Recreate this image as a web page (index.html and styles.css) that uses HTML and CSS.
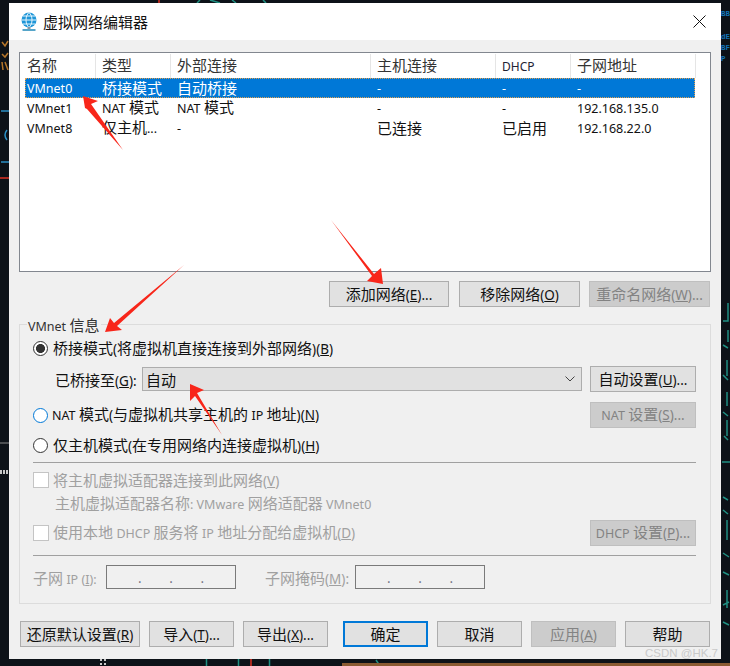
FILE: index.html
```html
<!DOCTYPE html>
<html lang="zh-CN">
<head>
<meta charset="utf-8">
<title>虚拟网络编辑器</title>
<link rel="stylesheet" href="styles.css">
</head>
<body>
<svg class="backdrop" viewBox="0 0 730 666" width="730" height="666" aria-hidden="true">
  <g class="bd-orange" fill="none" stroke="#b5762a" stroke-width="1.500">
    <path d="M2 42l3 4 3-5M2 54l3 3 3-4M2 62l1 8M5 62l3 8"/>
  </g>
  <g fill="none" stroke="#2b8fc4" stroke-width="1.500">
    <path d="M1 131h8M7 150q-4 5 0 10M1 182h8" transform="translate(0 -20)"/>
  </g>
  <path d="M0 178h9" stroke="#a8281f" stroke-width="2"/>
  <path d="M0 443h9" stroke="#8a8a8a" stroke-width="1"/>
  <path d="M0 472h9" stroke="#c8c8c8" stroke-width="4" stroke-dasharray="2 1"/>
  <g fill="#1273b8" font-family="Liberation Mono, monospace" font-size="7.500" font-weight="700">
    <text x="721" y="16">BB</text>
    <text x="721" y="39">dE</text>
    <text x="721" y="50">BF</text>
    <text x="721" y="61">P</text>
  </g>
  <g stroke="#1f8f82" stroke-width="1.500" fill="none">
    <path d="M728 303v18h-5M728 330v12M723 345l5 3M727 360v16M723 375l5 5M727 392v14M723 412l5 4M727 420v16M724 436l4 4M722 462h8M723 497l5 3M723 510l5 4M727 520v20M723 553l6 4M723 572l6 3M727 590v18M723 605l6-3M723 622l6 3"/>
    <path d="M206.500 659v7M238.500 659v7M269.500 659v7M376 660l4 6M200 0l-3 3M210 0l10 3M232 0l4 3M263 0l3 3"/>
  </g>
  <path d="M251 659v7" stroke="#a8281f" stroke-width="2"/>
  <path d="M159 0v3" stroke="#a8281f" stroke-width="2"/>
  <path d="M100 660h8M100 664h8" stroke="#c8c8c8" stroke-width="2" stroke-dasharray="2 2"/>
  <path d="M342 664.500h388" stroke="#8a5a32" stroke-width="3"/>
</svg>

<div class="dialog">
  <header class="titlebar">
    <svg class="app-icon" viewBox="0 0 18 20" width="18" height="20">
      <circle cx="9" cy="8" r="7.500" fill="#1f96d8"/>
      <path d="M1.500 8h15M3 4h12M3 12h12M9 .5C5 4 5 12 9 15.500M9 .5C13 4 13 12 9 15.500" fill="none" stroke="#e6f5fc" stroke-width="1"/>
      <rect x="7.500" y="15" width="3" height="2" fill="#8b97a0"/>
      <rect x="2.500" y="17" width="13" height="2" fill="#56a5c9"/>
    </svg>
    <span class="title">虚拟网络编辑器</span>
    <svg class="close" viewBox="0 0 13 13" width="13" height="13"><path d="M.5.500l12 12M12.500.500l-12 12" stroke="#111" stroke-width="1" fill="none"/></svg>
  </header>

  <main class="content">
    <section class="list">
      <div class="row head">
        <span class="cell">名称</span><span class="cell">类型</span><span class="cell">外部连接</span><span class="cell">主机连接</span><span class="cell"><span class="lat dhcp">DHCP</span></span><span class="cell">子网地址</span>
      </div>
      <div class="row selected">
        <span class="cell"><span class="lat">VMnet0</span></span><span class="cell">桥接模式</span><span class="cell">自动桥接</span><span class="cell"><span class="lat">-</span></span><span class="cell"><span class="lat">-</span></span><span class="cell"><span class="lat">-</span></span>
      </div>
      <div class="row">
        <span class="cell"><span class="lat">VMnet1</span></span><span class="cell"><span class="lat">NAT</span> 模式</span><span class="cell"><span class="lat">NAT</span> 模式</span><span class="cell"><span class="lat">-</span></span><span class="cell"><span class="lat">-</span></span><span class="cell"><span class="lat">192.168.135.0</span></span>
      </div>
      <div class="row">
        <span class="cell"><span class="lat">VMnet8</span></span><span class="cell">仅主机<span class="lat">...</span></span><span class="cell"><span class="lat">-</span></span><span class="cell">已连接</span><span class="cell">已启用</span><span class="cell"><span class="lat">192.168.22.0</span></span>
      </div>
    </section>

    <div class="list-actions">
      <button class="btn w120">添加网络<span class="m">(<u>E</u>)...</span></button>
      <button class="btn w121">移除网络<span class="m">(<u>O</u>)</span></button>
      <button class="btn w121 off">重命名网络<span class="m">(<u>W</u>)...</span></button>
    </div>

    <section class="group">
      <div class="legend"><span class="lat">VMnet</span> 信息</div>

      <div class="opt r-first">
        <span class="radio on"></span><span>桥接模式<span class="m">(</span>将虚拟机直接连接到外部网络<span class="m">)(<u>B</u>)</span></span>
      </div>
      <div class="bridge">
        <span class="bridge-label">已桥接至<span class="m">(<u>G</u>):</span></span>
        <div class="combo">
          <span>自动</span>
          <svg viewBox="0 0 10 6" width="10" height="6"><path d="M.5.500l4.500 4.500 4.500-4.500" fill="none" stroke="#444" stroke-width="1"/></svg>
        </div>
        <button class="btn w106">自动设置<span class="m">(<u>U</u>)...</span></button>
      </div>
      <div class="opt r-nat">
        <span class="radio focus"></span><span class="grow"><span class="lat">NAT</span> 模式<span class="m">(</span>与虚拟机共享主机的 <span class="lat">IP</span> 地址<span class="m">)(<u>N</u>)</span></span>
        <button class="btn w106 off"><span class="lat">NAT</span> 设置<span class="m">(<u>S</u>)...</span></button>
      </div>
      <div class="opt r-host">
        <span class="radio"></span><span>仅主机模式<span class="m">(</span>在专用网络内连接虚拟机<span class="m">)(<u>H</u>)</span></span>
      </div>

      <hr class="sep s1">

      <div class="opt dim r-check">
        <span class="check"></span><span>将主机虚拟适配器连接到此网络<span class="m">(<u>V</u>)</span></span>
      </div>
      <div class="adapter dim">主机虚拟适配器名称<span class="lat">: VMware</span> 网络适配器 <span class="lat">VMnet0</span></div>
      <div class="opt dim r-dhcp">
        <span class="check"></span><span class="grow">使用本地 <span class="lat">DHCP</span> 服务将 <span class="lat">IP</span> 地址分配给虚拟机<span class="m">(<u>D</u>)</span></span>
        <button class="btn w106 off"><span class="lat">DHCP</span> 设置<span class="m">(<u>P</u>)...</span></button>
      </div>

      <hr class="sep s2">

      <div class="subnet dim">
        <span class="sub-l1">子网 <span class="lat">IP (<u>I</u>):</span></span>
        <div class="ip"><i>.</i><i>.</i><i>.</i></div>
        <span class="sub-l2">子网掩码<span class="m">(<u>M</u>):</span></span>
        <div class="ip"><i>.</i><i>.</i><i>.</i></div>
      </div>
    </section>

    <footer class="footer">
      <button class="btn w120">还原默认设置<span class="m">(<u>R</u>)</span></button>
      <button class="btn w85">导入<span class="m">(<u>T</u>)...</span></button>
      <button class="btn w85">导出<span class="m">(<u>X</u>)...</span></button>
      <button class="btn w85 primary">确定</button>
      <button class="btn w85">取消</button>
      <button class="btn w85 off">应用<span class="m">(<u>A</u>)</span></button>
      <button class="btn w85">帮助</button>
    </footer>
  </main>
</div>

<svg class="overlay" viewBox="0 0 730 666" width="730" height="666" aria-hidden="true">
  <g fill="#f8261a">
    <polygon points="83,96 98,101 91,104 123,150 87,109 85,108"/>
    <polygon points="331,220 374,274 381,268 383,284 367,281 372,276"/>
    <polygon points="184,265 114,323 110,318 105,332 122,330 117,326"/>
    <polygon points="222,435 197,393 204,390 190,384 190,401 195,396"/>
  </g>
</svg>
<span class="watermark">CSDN @HK.7</span>
</body>
</html>
```
FILE: styles.css
```css
* { box-sizing: border-box; }
html, body { margin: 0; padding: 0; height: 666px; overflow: hidden; }
body {
  background: #0d1218;
  font-family: "Noto Sans CJK SC", "Noto Sans", sans-serif;
  font-size: 15px;
  color: #111;
  position: relative;
  padding: 3px 0 0 9px;
}
.lat { font-family: "Noto Sans", "Noto Sans CJK SC", sans-serif; font-size: 12.5px; }
.m { font-family: "Noto Sans", "Noto Sans CJK SC", sans-serif; font-size: 13.5px; }
u { text-underline-offset: 1px; }

.backdrop { position: absolute; left: 0; top: 0; }
.dialog { position: relative; width: 712px; height: 656px; background: #f0f0f0; }

.titlebar {
  height: 37px;
  background: #fff;
  display: flex;
  align-items: center;
  padding: 0 15px 0 11px;
}
.app-icon { flex: none; margin-top: 1px; }
.title { margin-left: 5px; flex: 1; line-height: 20px; }
.close { flex: none; }

.content { padding: 12px 10px 0; }

.list {
  height: 220px;
  background: #fff;
  border: 1px solid #82878f;
  padding: 0 15px 0 5px;
}
.row { display: grid; grid-template-columns: 71px 75px 200px 125px 75px 125px; height: 20px; align-items: center; line-height: 18px; }
.row.head { height: 25px; }
.row.head .cell { border-right: 1px solid #e5e5e5; height: 24px; line-height: 22px; color: #333; }
.row.selected { background: #0078d7; color: #fff; outline: 1px dotted #e0a050; outline-offset: -1px; }
.cell { padding-left: 2px; white-space: nowrap; }
.row .cell:nth-child(n+2) { padding-left: 6px; }
.dhcp { font-size: 12px; color: #223; }

.btn {
  font: inherit;
  height: 26px;
  background: #e1e1e1;
  border: 1px solid #adadad;
  color: #111;
  padding: 0;
  flex: none;
  white-space: nowrap;
  line-height: 22px;
}
.btn.off { background: #cccccc; border-color: #bfbfbf; color: #838383; }
.btn.primary { border: 2px solid #0078d7; }
.w120 { width: 120px; }
.w121 { width: 121px; }
.w106 { width: 106px; }
.w85 { width: 85px; }

.list-actions { display: flex; justify-content: flex-end; gap: 9px; margin-top: 9px; padding-right: 1px; }
.list-actions .w120 { margin-right: 1px; }

.group {
  margin-top: 17px;
  height: 280px;
  border: 1px solid #dcdcdc;
  padding: 0 14px 0 13px;
}
.legend { height: 20px; width: max-content; margin: -10px 0 0 -6px; padding: 0 1px; background: #f0f0f0; line-height: 20px; color: #333; }

.opt { display: flex; align-items: center; line-height: 20px; }
.grow { flex: 1; }
.r-first { height: 20px; margin-top: 3px; }
.r-nat { height: 26px; margin-top: 10px; }
.r-host { height: 20px; margin-top: 7px; }
.r-check { height: 20px; margin-top: 7px; }
.r-dhcp { height: 26px; margin-top: 7px; }

.radio {
  flex: none;
  width: 15px;
  height: 15px;
  border-radius: 50%;
  border: 1.5px solid #333;
  background: #fff;
  margin-right: 5px;
}
.radio.on { background: radial-gradient(circle, #333 0 4.2px, #fff 4.800px); }
.radio.focus { border-color: #0078d7; margin-right: 4px; }
.check { flex: none; width: 16px; height: 16px; background: #fff; border: 1px solid #c4c4c4; margin-right: 4px; }

.bridge { display: flex; align-items: center; height: 26px; margin-top: 8px; padding-left: 22px; }
.bridge-label { width: 87px; flex: none; }
.combo {
  flex: none;
  width: 440px;
  height: 24px;
  margin-right: 8px;
  background: #e1e1e1;
  border: 1px solid #adadad;
  display: flex;
  align-items: center;
  justify-content: space-between;
  padding: 0 6px 0 3px;
}

.sep { border: 0; height: 1px; background: #a0a0a0; margin: 0; }
.s1 { margin-top: 7px; }
.s2 { margin-top: 9px; }

.dim { color: #a0a0a0; }
.adapter { height: 20px; margin-top: 3px; padding-left: 22px; line-height: 20px; }

.subnet { display: flex; align-items: center; height: 24px; margin-top: 9px; }
.sub-l1 { width: 73px; flex: none; }
.sub-l2 { width: 90px; flex: none; margin-left: 29px; }
.ip {
  flex: none;
  width: 130px;
  height: 24px;
  border: 1px solid #7a7a7a;
  background: #f0f0f0;
  display: flex;
  justify-content: space-between;
  padding: 0 31px;
}
.ip i { font-style: normal; font-size: 13px; line-height: 24px; color: #667; }

.footer { display: flex; margin-top: 17px; gap: 9px; padding-left: 1px; }
.footer .primary { margin-left: 6px; }

.overlay { position: absolute; left: 0; top: 0; pointer-events: none; }
.watermark { position: absolute; left: 645px; top: 645px; font-family: "Liberation Sans", sans-serif; font-size: 11.5px; line-height: 16px; color: #c9c9c9; }
```
